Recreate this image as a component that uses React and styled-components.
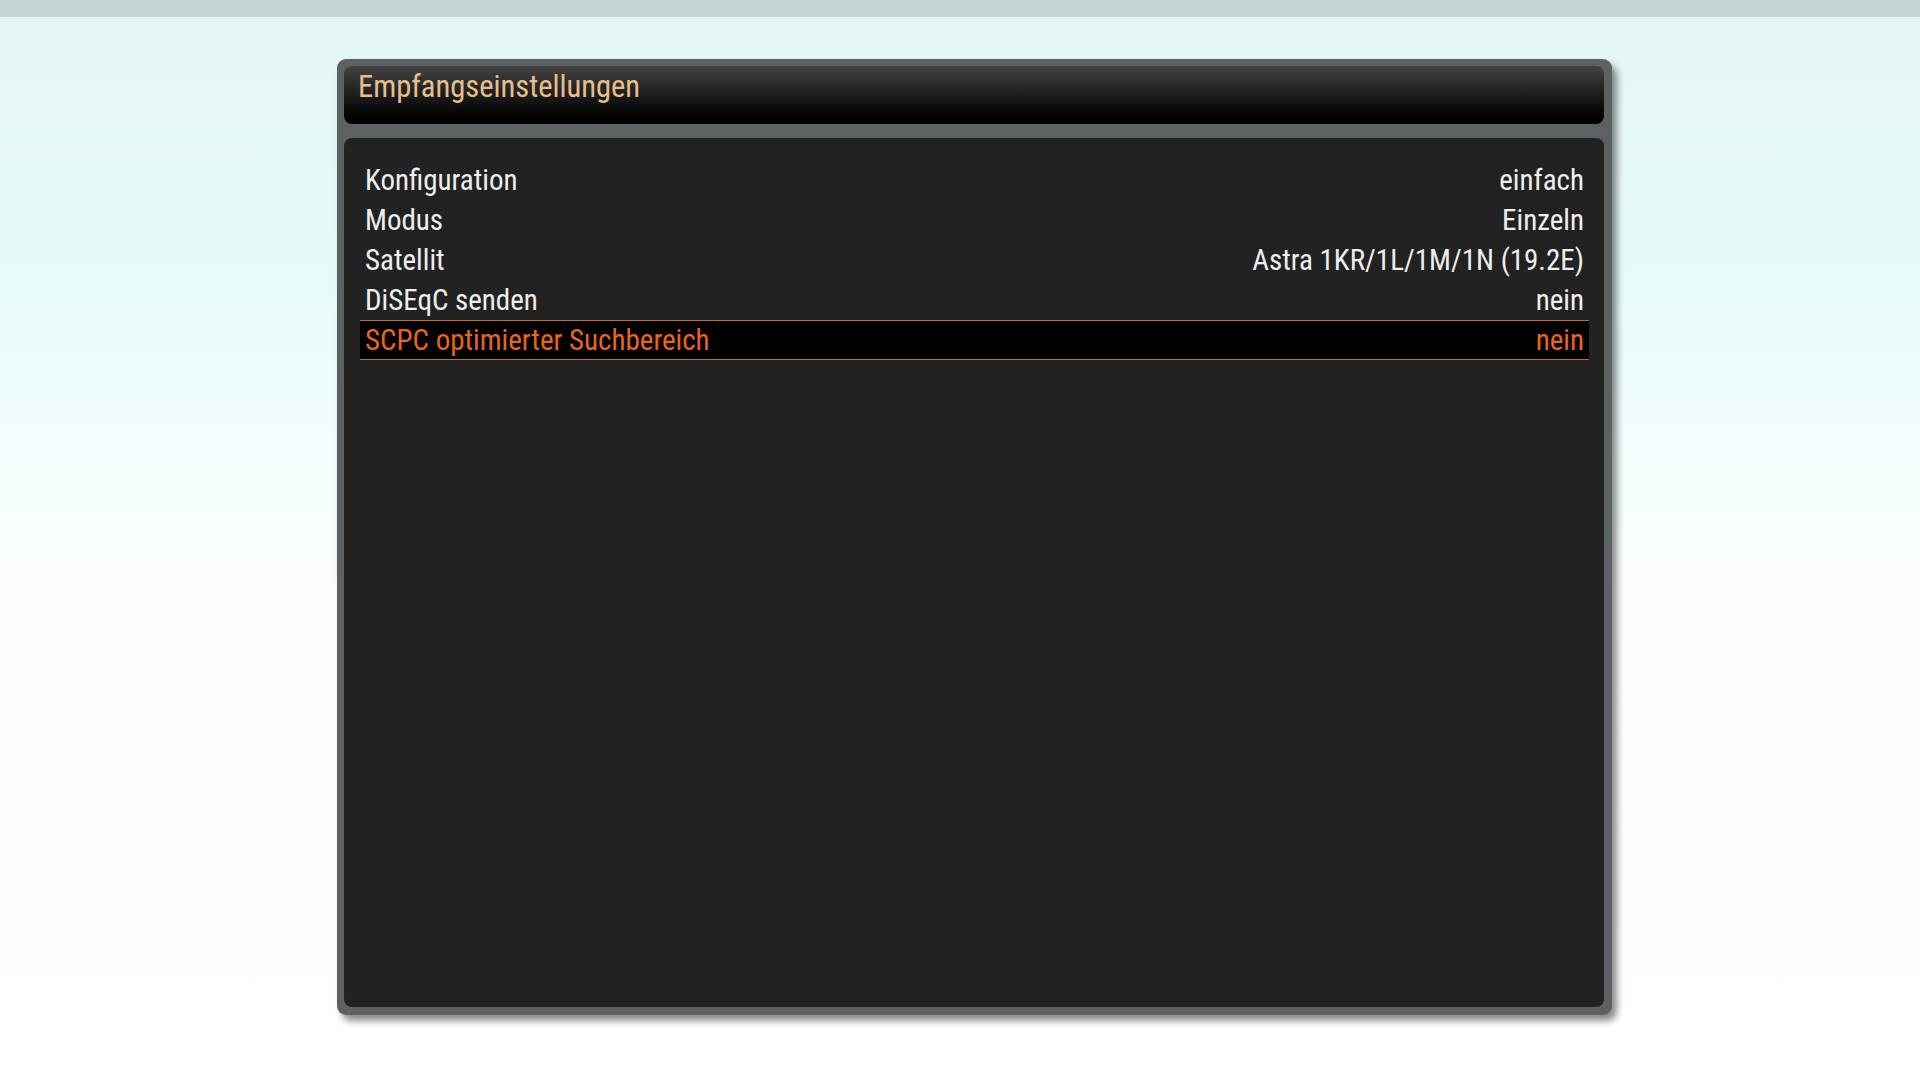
import React from 'react';
import styled, { createGlobalStyle } from 'styled-components';

const GlobalStyle = createGlobalStyle`
  html, body {
    margin: 0;
    padding: 0;
    width: 1920px;
    height: 1080px;
    overflow: hidden;
  }
  body {
    font-family: "Roboto Condensed", Roboto, "Liberation Sans", sans-serif;
    background: linear-gradient(
      to bottom,
      #c4d3d3 0px,
      #c4d3d3 17px,
      #e3f6f5 17px,
      #e8fbfb 300px,
      #f5fdfd 480px,
      #fdfdfd 600px,
      #ffffff 1080px
    );
  }
`;

const Screen = styled.div`
  width: 1920px;
  height: 1080px;
  box-sizing: border-box;
  padding: 59px 0 0 337px;
`;

const Frame = styled.div`
  width: 1275px;
  height: 956px;
  box-sizing: border-box;
  padding: 7px 8px 8px 7px;
  display: flex;
  flex-direction: column;
  gap: 14px;
  background: #5c6263;
  border-radius: 9px;
  box-shadow: 5px 6px 7px rgba(0, 0, 0, 0.45);
`;

const Header = styled.div`
  height: 58px;
  flex: 0 0 58px;
  box-sizing: border-box;
  padding: 0 14px;
  border-radius: 8px;
  background: linear-gradient(to bottom, #434343 0%, #1c1c1c 50%, #000000 90%, #000000 100%);
  display: flex;
  align-items: flex-start;
`;

const Title = styled.div`
  font-size: 30.5px;
  line-height: 38px;
  padding-top: 2px;
  color: #e6c08a;
  white-space: nowrap;
`;

const Body = styled.div`
  flex: 1;
  box-sizing: border-box;
  padding: 22px 15px 0 16px;
  background: #222222;
  border-radius: 8px;
  display: flex;
  flex-direction: column;
`;

const Row = styled.div`
  height: 40px;
  box-sizing: border-box;
  padding: 0 5px 0 5px;
  display: flex;
  justify-content: space-between;
  align-items: center;
  font-size: 29px;
  line-height: 38px;
  white-space: nowrap;
  color: ${({ $active }) => ($active ? '#e8661c' : '#efefef')};
  background: ${({ $active }) => ($active ? '#000000' : 'transparent')};
  border-top: 1px solid ${({ $active }) => ($active ? '#c96a22' : 'transparent')};
  border-bottom: 1px solid ${({ $active }) => ($active ? '#c96a22' : 'transparent')};
`;

const Label = styled.span``;
const Value = styled.span``;

const settings = [
  { label: 'Konfiguration', value: 'einfach' },
  { label: 'Modus', value: 'Einzeln' },
  { label: 'Satellit', value: 'Astra 1KR/1L/1M/1N (19.2E)' },
  { label: 'DiSEqC senden', value: 'nein' },
  { label: 'SCPC optimierter Suchbereich', value: 'nein' },
];

const App = () => {
  const selected = 4;
  return (
    <>
      <GlobalStyle />
      <Screen>
        <Frame>
          <Header>
            <Title>Empfangseinstellungen</Title>
          </Header>
          <Body>
            {settings.map((s, i) => (
              <Row key={s.label} $active={i === selected}>
                <Label>{s.label}</Label>
                <Value>{s.value}</Value>
              </Row>
            ))}
          </Body>
        </Frame>
      </Screen>
    </>
  );
};

export default App;
